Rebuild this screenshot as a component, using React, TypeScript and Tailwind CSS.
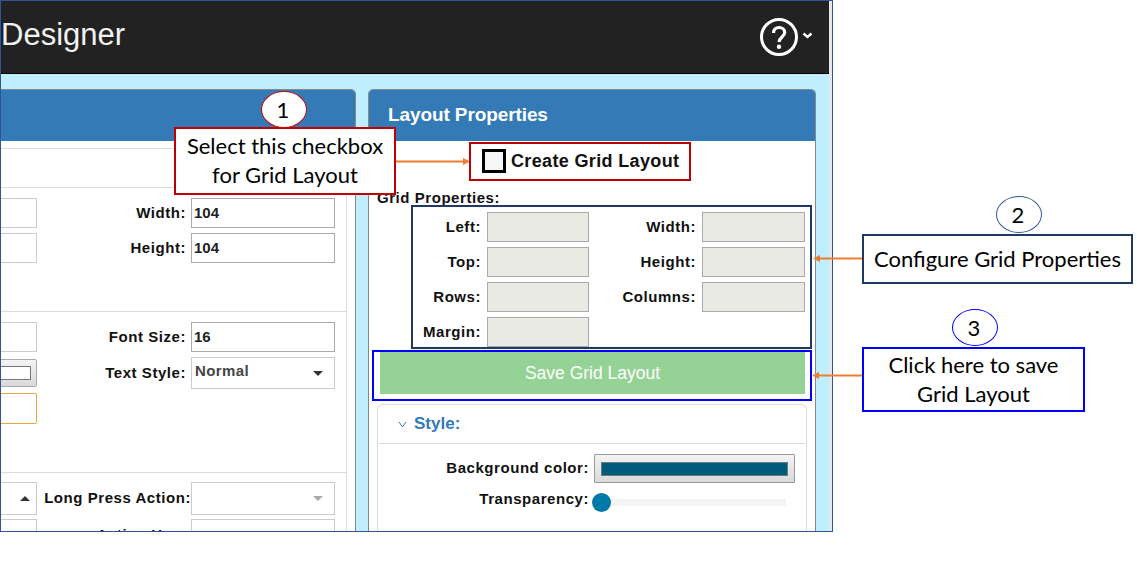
const arial = "font-['Liberation_Sans',Arial,sans-serif]";
const callout = "font-['Lato',sans-serif]";
const labelText = 'text-[15px] font-bold tracking-[0.55px] text-[#111]';

function Field({ label, value, width = 'w-[144px]', disabled = false }: { label: string; value?: string; width?: string; disabled?: boolean }) {
  return (
    <div className={`flex items-center justify-end ${disabled ? 'gap-[6px]' : 'gap-[5px]'}`}>
      <span className={labelText}>{label}</span>
      <div
        className={`${width} h-[30px] border border-[#aaa] px-[2px] text-[15px] font-bold leading-[28px] text-[#222] ${disabled ? 'bg-[#eaeae4]' : 'bg-white'}`}
      >
        {value}
      </div>
    </div>
  );
}

function SelectBox({ value, muted = false, height = 'h-[32px]' }: { value?: string; muted?: boolean; height?: string }) {
  return (
    <div className={`flex ${height} w-[144px] items-center justify-between border border-[#ccc] bg-white pl-[3px] pr-[11px]`}>
      <span className="mb-[3px] text-[15px] font-bold tracking-[0.4px] text-[#444]">{value}</span>
      <span className={`h-0 w-0 border-x-[5px] border-t-[5px] border-x-transparent ${muted ? 'border-t-[#aaa]' : 'border-t-[#333]'}`} />
    </div>
  );
}

function Stub({ height = 'h-[30px]', className = 'border-[#ccc]' }: { height?: string; className?: string }) {
  return <div className={`${height} w-[36px] shrink-0 border-y border-r bg-white ${className}`} />;
}

function Row({ stub, children }: { stub: React.ReactNode; children: React.ReactNode }) {
  return (
    <div className="flex items-center justify-between pr-[11px]">
      {stub}
      {children}
    </div>
  );
}

function LeftPanel() {
  return (
    <section className="flex w-[355px] shrink-0 flex-col overflow-hidden rounded-tr-[5px] border-r border-t border-[#888] bg-white">
      <div className="h-[51px] shrink-0 bg-[#337ab7]" />
      <div className="w-[346px] flex-1 border-r border-[#dcdcdc] pt-[7px]">
        <div className="h-[40px] border-y border-[#dcdcdc]" />
        <div className="h-[124px] border-b border-[#dcdcdc] pt-[10px]">
          <div className="flex flex-col gap-[5px]">
            <Row stub={<Stub />}><Field label="Width:" value="104" /></Row>
            <Row stub={<Stub />}><Field label="Height:" value="104" /></Row>
          </div>
        </div>
        <div className="h-[161px] border-b border-[#dcdcdc] pt-[10px]">
          <Row stub={<Stub className="border-[#ccc]" />}><Field label="Font Size:" value="16" /></Row>
          <div className="mt-[5px] flex items-center justify-between pr-[11px]">
            <div className="flex h-[28px] w-[36px] items-center rounded-r-[2px] border-y border-r border-[#aaa] bg-gradient-to-b from-[#f4f4f4] to-[#d9d9d9] pr-[5px]">
              <div className="h-[14px] w-full border-y border-r border-[#777] bg-white" />
            </div>
            <div className="flex items-center gap-[5px]">
              <span className={labelText}>Text Style:</span>
              <SelectBox value="Normal" />
            </div>
          </div>
          <div className="mt-[4px] h-[31px] w-[36px] rounded-r-[2px] border-y border-r border-[#e2a93f] bg-white" />
        </div>
        <div className="pt-[9px]">
          <div className="flex items-center justify-between pr-[11px]">
            <div className="flex h-[33px] w-[36px] items-center justify-end border-y border-r border-[#ccc] bg-white pr-[6px]">
              <span className="h-0 w-0 border-x-[5px] border-b-[5px] border-x-transparent border-b-[#333]" />
            </div>
            <div className="flex items-center">
              <span className={labelText}>Long Press Action:</span>
              <SelectBox muted height="h-[33px]" />
            </div>
          </div>
          <div className="mt-[4px] flex items-start justify-between pr-[11px]">
            <Stub height="h-[30px]" />
            <div className="flex items-start gap-[5px]">
              <span className={`mt-[5px] ${labelText}`}>Action Use:</span>
              <div className="h-[30px] w-[144px] border border-[#ccc] bg-white" />
            </div>
          </div>
        </div>
      </div>
    </section>
  );
}

function RightPanel() {
  return (
    <section className="flex w-[448px] shrink-0 flex-col overflow-hidden rounded-t-[5px] border-x border-t border-[#888] bg-white">
      <div className="flex h-[51px] shrink-0 items-center bg-[#337ab7] pl-[19px] text-[19px] font-bold tracking-[-0.1px] text-white">
        Layout Properties
      </div>
      <div className="flex h-[40px] shrink-0 items-center gap-[5px] pl-[113px]">
        <div className="h-[24px] w-[24px] border-[3px] border-black bg-[#f6f6f6]" />
        <span className="text-[18px] font-bold tracking-[0.35px] text-[#111]">Create Grid Layout</span>
      </div>
      <div className={`mt-[9px] ml-[8px] leading-[16px] ${labelText}`}>Grid Properties:</div>
      <div className="mt-[6px] ml-[11px] grid w-[425px] grid-cols-[209px_216px] gap-y-[5px]">
        <Field label="Left:" width="w-[102px]" disabled />
        <Field label="Width:" width="w-[103px]" disabled />
        <Field label="Top:" width="w-[102px]" disabled />
        <Field label="Height:" width="w-[103px]" disabled />
        <Field label="Rows:" width="w-[102px]" disabled />
        <Field label="Columns:" width="w-[103px]" disabled />
        <Field label="Margin:" width="w-[102px]" disabled />
      </div>
      <button className="mt-[5px] ml-[11px] h-[42px] w-[425px] shrink-0 bg-[#95d295] text-[17.5px] text-white">Save Grid Layout</button>
      <div className="mt-[10px] ml-[8px] w-[430px] flex-1 rounded-t-[6px] border-x border-t border-[#dcdcdc]">
        <div className="flex h-[39px] items-center gap-[7px] border-b border-[#dcdcdc] pl-[20px]">
          <svg width="9" height="7" viewBox="0 0 9 7" fill="none" stroke="#337ab7" strokeWidth="1">
            <path d="M1 1l3.5 5L8 1" />
          </svg>
          <span className="text-[17px] font-bold text-[#337ab7]">Style:</span>
        </div>
        <div className="flex items-center pt-[10px]">
          <span className={`w-[211px] text-right ${labelText}`}>Background color:</span>
          <div className="ml-[5px] flex h-[29px] w-[201px] items-center rounded-[1px] border border-[#999] bg-gradient-to-b from-[#f4f4f4] to-[#d9d9d9] px-[6px]">
            <div className="h-[14px] w-full border border-[#6b7b84] bg-[#005a7a]" />
          </div>
        </div>
        <div className="mt-[5px] flex items-center">
          <span className={`w-[211px] text-right ${labelText}`}>Transparency:</span>
          <div className="relative mt-[6px] ml-[12px] h-[7px] w-[185px] bg-[#f3f3f3]">
            <span className="absolute top-[-6px] left-[-9px] h-[19px] w-[19px] rounded-full bg-[#0078a8]" />
          </div>
        </div>
      </div>
    </section>
  );
}

function Bubble({ n, className }: { n: string; className: string }) {
  return (
    <div className={`absolute flex h-[37px] w-[46px] items-center justify-center rounded-[50%] border bg-white pr-[2px] text-[22px] text-black ${callout} ${className}`}>
      {n}
    </div>
  );
}

function Note({ className, children }: { className: string; children: React.ReactNode }) {
  return (
    <div className={`absolute flex items-center justify-center border-2 bg-white pb-[2px] text-center text-[22px] leading-[29px] text-black ${callout} ${className}`}>
      {children}
    </div>
  );
}

function Arrow({ className, flip = false, width }: { className: string; flip?: boolean; width: number }) {
  return (
    <svg className={`absolute ${className}`} width={width} height="9" viewBox={`0 0 ${width} 9`}>
      {flip ? (
        <>
          <path d={`M${width} 4.5H6`} stroke="#ed7d31" strokeWidth="2" />
          <path d="M0 4.5L7 1v7z" fill="#ed7d31" />
        </>
      ) : (
        <>
          <path d={`M0 4.5H${width - 6}`} stroke="#ed7d31" strokeWidth="2" />
          <path d={`M${width} 4.5L${width - 7} 1v7z`} fill="#ed7d31" />
        </>
      )}
    </svg>
  );
}

export default function App() {
  return (
    <div className={`relative h-[561px] w-[1137px] overflow-hidden bg-white ${arial}`}>
      <div className="flex h-[532px] w-[833px] flex-col overflow-hidden border border-[#2f5597]">
        <div className="flex min-h-0 flex-1">
          <div className="flex min-w-0 flex-1 flex-col">
            <header className="flex h-[73px] shrink-0 items-center justify-between border-b border-black bg-[#222] pr-[16px]">
              <span className="mb-[4px] text-[31px] text-[#f2f2f2]">Designer</span>
              <div className="flex items-start gap-[3px]">
                <svg width="40" height="40" viewBox="0 0 40 40" fill="none" stroke="#fff">
                  <circle cx="20" cy="20" r="17.5" strokeWidth="3" />
                  <path d="M14.5 16c0-3.5 2.4-5.5 5.6-5.5s5.6 2 5.6 5c0 4.5-5.6 4.5-5.6 9.5" strokeWidth="3.2" />
                  <circle cx="20" cy="29.8" r="2.2" fill="#fff" stroke="none" />
                </svg>
                <svg className="mt-[15px]" width="11" height="7" viewBox="0 0 11 7" fill="none" stroke="#fff" strokeWidth="2.4">
                  <path d="M1.5 1.5l4 3.5 4-3.5" />
                </svg>
              </div>
            </header>
            <main className="flex min-h-0 flex-1 gap-[12px] bg-[#bfefff] pt-[15px]">
              <LeftPanel />
              <RightPanel />
            </main>
          </div>
          <div className="w-[3px] shrink-0 bg-[#e4e8ea]" />
        </div>
      </div>

      {/* annotation 1 */}
      <Arrow className="top-[157px] left-[396px]" width={74} />
      <div className="absolute top-[142px] left-[469px] h-[39px] w-[222px] border-2 border-[#c00000]" />
      <Bubble n="1" className="top-[91px] left-[261px] border-[#c00000]" />
      <Note className="top-[127px] left-[174px] h-[68px] w-[222px] border-[#c00000]">
        Select this checkbox
        <br />
        for Grid Layout
      </Note>

      {/* annotation 2 */}
      <div className="absolute top-[205px] left-[411px] h-[144px] w-[401px] border-2 border-[#1f3864]" />
      <Arrow className="top-[254px] left-[813px]" width={50} flip />
      <Bubble n="2" className="top-[196px] left-[996px] border-[#2f5597]" />
      <Note className="top-[234px] left-[862px] h-[50px] w-[271px] border-[#1f3864]">Configure Grid Properties</Note>

      {/* annotation 3 */}
      <div className="absolute top-[350px] left-[372px] h-[51px] w-[440px] border-2 border-[#0000ff]" />
      <Arrow className="top-[371px] left-[812px]" width={51} flip />
      <Bubble n="3" className="top-[309px] left-[952px] border-[#0000ff]" />
      <Note className="top-[347px] left-[862px] h-[65px] w-[223px] border-[#0000ff]">
        Click here to save
        <br />
        Grid Layout
      </Note>
    </div>
  );
}
